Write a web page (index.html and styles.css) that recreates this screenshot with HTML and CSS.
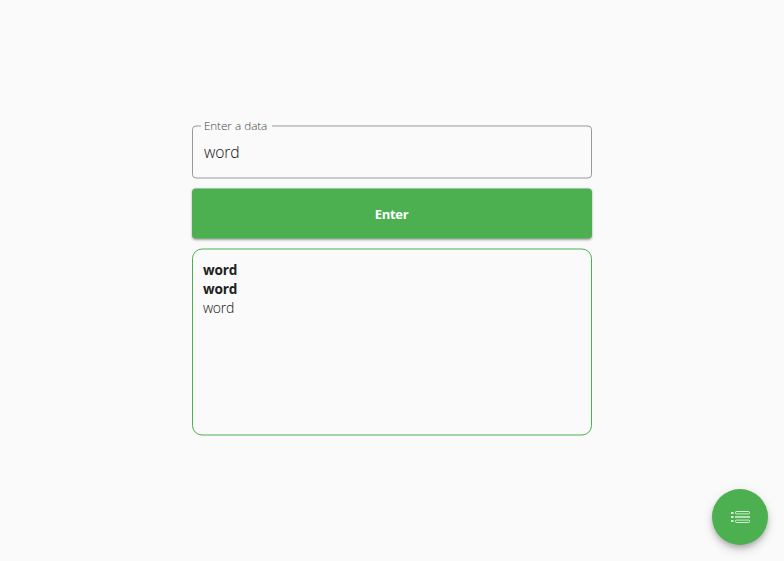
FILE: index.html
```html
<!DOCTYPE html>
<html lang="en">
<head>
<meta charset="utf-8">
<title>Words</title>
<link rel="stylesheet" href="styles.css">
</head>
<body>
<main class="panel">
  <div class="field">
    <span class="label">Enter a data</span>
    <span class="value">word</span>
  </div>
  <button class="enter"><span>Enter</span></button>
  <div class="output">
    <div class="strong">word</div>
    <div class="strong">word</div>
    <div class="light">word</div>
  </div>
</main>
<button class="fab" aria-label="List">
  <svg width="20" height="14" viewBox="0 0 20 14">
    <g fill="#fff" fill-opacity=".75">
      <rect x="1" y="2" width="2.6" height="2"/><rect x="1" y="6" width="2.6" height="2"/><rect x="1" y="10" width="2.6" height="2"/>
      <rect x="5" y="6" width="15" height="2" fill-opacity=".6"/>
    </g>
    <g fill="none" stroke="#fff" stroke-opacity=".75">
      <rect x="5.5" y="1.5" width="14" height="2.4" rx=".8"/>
      <rect x="5.5" y="10.1" width="14" height="2.4" rx=".8"/>
    </g>
  </svg>
</button>
</body>
</html>
```
FILE: styles.css
```css
* { box-sizing: border-box; }
body {
  margin: 0;
  height: 560px;
  display: flex;
  align-items: center;
  justify-content: center;
  background: #fafafa;
  color: #212121;
  font-family: "Segoe UI", "Open Sans", "Noto Sans", sans-serif;
}
.panel { width: 400px; display: flex; flex-direction: column; gap: 10px; }
.field, .enter, .output { position: relative; }
.field::before, .enter::before, .output::before {
  content: "";
  position: absolute;
  inset: 0;
  transform: translateY(.5px);
}
.field { height: 53px; padding: 0 12px; display: flex; align-items: center; }
.field::before { border: 1px solid #999; border-radius: 4px; }
.label {
  position: absolute;
  left: 9px;
  top: -8px;
  padding: 0 4px 0 3px;
  width: 71px;
  background: #fafafa;
  color: #444;
  font-size: 11.7px;
  font-weight: 360;
  letter-spacing: -.12px;
  word-spacing: .4px;
  line-height: 16px;
  white-space: nowrap;
}
.value { font-size: 15.7px; font-weight: 360; letter-spacing: -.1px; line-height: 24px; color: #111; }
.enter {
  height: 50px;
  padding: 0;
  border: 0;
  background: none;
  color: #fff;
  font: 680 13px/18px "Segoe UI", "Open Sans", "Noto Sans", sans-serif;
  letter-spacing: -.3px;
}
.enter::before {
  background: #4caf50;
  border-radius: 4px;
  box-shadow: 0 1px 3px rgba(0,0,0,.18), 0 1px 2px rgba(0,0,0,.2);
}
.enter span { position: relative; top: 1px; left: -.5px; }
.output { height: 187px; padding: 12px 11px; font-size: 14px; line-height: 19px; }
.output::before { border: 1px solid #4caf50; border-radius: 10px; }
.strong { font-size: 13.6px; font-weight: 700; letter-spacing: -.2px; }
.light { font-weight: 340; letter-spacing: -.25px; color: #111; }
.fab {
  position: fixed;
  right: 16px;
  bottom: 16px;
  width: 56px;
  height: 56px;
  padding: 0;
  border: 0;
  border-radius: 50%;
  background: #4caf50;
  display: flex;
  align-items: center;
  justify-content: center;
  box-shadow: 0 3px 5px -1px rgba(0,0,0,.2), 0 6px 10px rgba(0,0,0,.14), 0 1px 12px rgba(0,0,0,.08);
}
```
